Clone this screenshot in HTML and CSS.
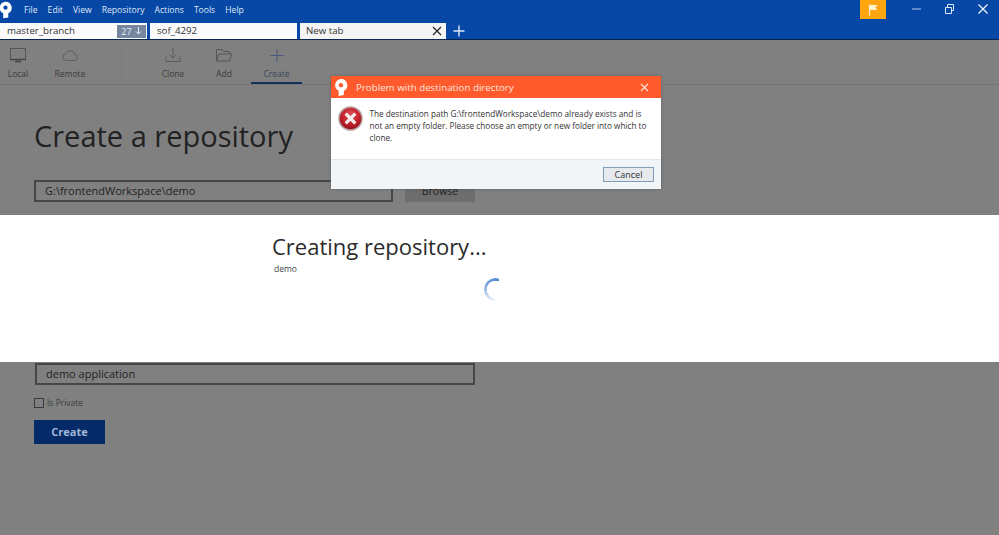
FILE: index.html
```html
<!DOCTYPE html>
<html lang="en">
<head>
<meta charset="utf-8">
<title>Sourcetree</title>
<link rel="stylesheet" href="styles.css">
</head>
<body>
<div class="app">
  <header class="titlebar">
    <div class="menurow">
      <svg class="logo" width="13" height="18" viewBox="0 0 14 18"><path d="M7 0a6.600 6.600 0 0 1 3 12.500V17L4.500 18V12.500A6.600 6.600 0 0 1 7 0z" fill="#fff"/><circle cx="7" cy="6.500" r="2.300" fill="#0747a6"/></svg>
      <nav class="menu"><span>File</span><span>Edit</span><span>View</span><span>Repository</span><span>Actions</span><span>Tools</span><span>Help</span></nav>
      <div class="flag"><svg width="12" height="12" viewBox="0 0 12 12"><path d="M2.500 0.500V11.500" stroke="#fff3d0" stroke-width="1.200"/><path d="M3 1H10.500L8.500 3.500L10.500 6H3z" fill="#fff3d0"/></svg></div>
      <div class="winbtns">
        <svg width="10" height="12" viewBox="0 0 10 12"><path d="M0 6H9" stroke="#b5cdee"/></svg>
        <svg width="10" height="12" viewBox="0 0 10 12"><path d="M0.500 4.500H6.500V10.500H0.500zM2.500 4.500V1.500H8.500V7.500H6.500" fill="none" stroke="#dde8f6"/></svg>
        <svg width="10" height="12" viewBox="0 0 10 12"><path d="M0.500 1.500L9.500 10.500M9.500 1.500L0.500 10.500" stroke="#fff" stroke-width="1.100"/></svg>
      </div>
    </div>
    <div class="tabrow">
      <div class="tab tab-repo"><span>master_branch</span><span class="badge">27 <svg width="7" height="8" viewBox="0 0 7 8"><path d="M3.500 0V7M1 4.500L3.500 7L6 4.500" fill="none" stroke="#e8edf4"/></svg></span></div>
      <div class="tab tab-repo"><span>sof_4292</span></div>
      <div class="tab tab-new"><span>New tab</span><svg width="10" height="10" viewBox="0 0 10 10"><path d="M1 1L9 9M9 1L1 9" stroke="#222" stroke-width="1.200"/></svg></div>
      <svg class="addtab" width="12" height="12" viewBox="0 0 12 12"><path d="M6 0.500V11.500M0.500 6H11.500" stroke="#dbe7f7" stroke-width="1.400"/></svg>
    </div>
  </header>

  <div class="toolbar">
    <div class="tool tool-local">
      <svg width="18" height="17" viewBox="0 0 18 17"><path d="M1.500 1.500H16.500V12.500H1.500z" fill="none" stroke="#555"/><path d="M1 12.500H17M6 14.500H12" stroke="#444" stroke-width="1.500"/></svg>
      <span>Local</span>
    </div>
    <div class="tool tool-remote">
      <svg width="18" height="17" viewBox="0 0 18 17"><path d="M5 13.500H13.500A3 3 0 0 0 14 7.600A5 5 0 0 0 4.800 6.300A3.700 3.700 0 0 0 5 13.500z" fill="none" stroke="#5e5e5e"/></svg>
      <span>Remote</span>
    </div>
    <div class="toolsep"></div>
    <div class="tool tool-clone">
      <svg width="18" height="17" viewBox="0 0 18 17"><path d="M9 1V11M5.500 7.500L9 11L12.500 7.500M2 9.500V14.500H16V9.500" fill="none" stroke="#5a5a5a"/></svg>
      <span>Clone</span>
    </div>
    <div class="tool tool-add">
      <svg width="18" height="17" viewBox="0 0 18 17"><path d="M1.500 14V2.500H7L8.500 4.500H14.500V7M1.500 14L4 7H17L14.500 14z" fill="none" stroke="#555"/></svg>
      <span>Add</span>
    </div>
    <div class="tool tool-create">
      <svg width="18" height="17" viewBox="0 0 18 17"><path d="M9 2V15M2.500 8.500H15.500" stroke="#45597a"/></svg>
      <span>Create</span>
    </div>
  </div>

  <main class="page">
    <h1>Create a repository</h1>
    <div class="pathrow">
      <div class="field field-path">G:\frontendWorkspace\demo</div>
      <div class="browse">Browse</div>
    </div>
    <div class="field field-desc">demo application</div>
    <label class="private"><span class="check"></span>Is Private</label>
    <div class="create-btn">Create</div>
  </main>

  <section class="band">
    <div class="progress">
      <h2>Creating repository...</h2>
      <p>demo</p>
    </div>
    <div class="spinner"></div>
  </section>

  <section class="dialog">
    <div class="dlg-title">
      <svg width="14" height="17" viewBox="0 0 14 18"><path d="M7 0a6.600 6.600 0 0 1 3 12.500V17L4.500 18V12.500A6.600 6.600 0 0 1 7 0z" fill="#fff"/><circle cx="7" cy="6.500" r="2.300" fill="#ff5a2c"/></svg>
      <span class="dlg-caption">Problem with destination directory</span>
      <svg width="9" height="9" viewBox="0 0 9 9"><path d="M1 1L8 8M8 1L1 8" stroke="#ffe4da" stroke-width="1.100"/></svg>
    </div>
    <div class="dlg-body">
      <svg class="err" width="25" height="25" viewBox="0 0 26 26"><defs><radialGradient id="errfill" cx="50%" cy="35%" r="65%"><stop offset="0" stop-color="#e0525a"/><stop offset="0.600" stop-color="#c2202c"/><stop offset="1" stop-color="#8e1018"/></radialGradient></defs><circle cx="13" cy="13" r="12" fill="url(#errfill)" stroke="#b7a3a3" stroke-width="1.600"/><path d="M8 8L18 18M18 8L8 18" stroke="#f6eeee" stroke-width="3.400"/></svg>
      <p>The destination path G:\frontendWorkspace\demo already exists and is not an empty folder. Please choose an empty or new folder into which to clone.</p>
    </div>
    <div class="dlg-foot"><div class="cancel">Cancel</div></div>
  </section>
</div>
</body>
</html>
```
FILE: styles.css
```css
* { box-sizing: border-box; }
html, body { margin: 0; height: 100%; overflow: hidden; }
body { font-family: "Open Sans", "Noto Sans", sans-serif; color: #222; background: #808080; }
.app { position: relative; width: 999px; height: 535px; display: flex; flex-direction: column; }

.titlebar { height: 40px; background: #0747a6; border-bottom: 1px solid #08264f; flex: none; }
.menurow { height: 22px; display: flex; align-items: flex-start; }
.logo { margin: 1px 0 0 -1px; flex: none; }
.menu { display: flex; gap: 10px; margin-left: 12px; padding-top: 3px; font-size: 8.600px; line-height: 14px; color: #dfe9f7; }
.flag { margin-left: auto; width: 26px; height: 19px; background: #ffa60f; display: flex; align-items: center; justify-content: center; }
.winbtns { width: 113px; display: flex; justify-content: space-between; padding: 3px 11px 0 26px; height: 19px; }

.tabrow { display: flex; gap: 3px; height: 17px; align-items: flex-start; padding-top: 1px; }
.tab { height: 16px; background: #fafafa; font-size: 9.700px; line-height: 16px; color: #333; display: flex; align-items: center; justify-content: space-between; }
.tab-repo { width: 147px; padding: 0 1px 0 7px; }
.tab-new { width: 146px; padding: 0 4px 0 6px; background: #f4f4f4; }
.badge { width: 29px; height: 13px; background: #76869f; color: #e8edf4; font-size: 9px; line-height: 13px; display: flex; align-items: center; justify-content: center; gap: 3px; }
.addtab { margin: 2px 0 0 4px; }

.toolbar { height: 45px; display: flex; border-bottom: 1px solid #767676; flex: none; position: relative; }
.tool { display: flex; flex-direction: column; align-items: center; font-size: 8.500px; line-height: 12px; color: #3c3c3c; padding-top: 7px; gap: 4px; }
.tool svg { flex: none; }
.tool-local { width: 36px; }
.tool-remote { width: 40px; margin-left: 14px; }
.toolsep { width: 1px; height: 34px; margin: 5px 0 0 31px; background: #7a7a7a; }
.tool-clone { width: 40px; margin-left: 31px; }
.tool-add { width: 30px; margin-left: 16px; }
.tool-create { width: 51px; margin-left: 12px; border-bottom: 2px solid #12305c; color: #3a4658; }

.page { flex: 1; padding: 31px 0 0 34px; }
h1 { margin: 0; font-size: 29px; font-weight: 400; line-height: 40px; color: #222; }
.pathrow { display: flex; gap: 12px; margin-top: 24px; }
.field { height: 22px; border: 2px solid #474747; font-size: 11px; line-height: 18px; padding-left: 9px; color: #222; }
.field-path { width: 359px; }
.browse { width: 70px; height: 22px; background: #6e6e6e; font-size: 10.500px; line-height: 22px; text-align: center; color: #222; }
.field-desc { width: 440px; margin: 161px 0 0 1px; }
.private { display: flex; align-items: center; gap: 3px; margin-top: 11px; height: 13px; font-size: 8.500px; color: #3c3c3c; }
.check { width: 10px; height: 10px; border: 1px solid #3a3a3a; }
.create-btn { width: 71px; height: 24px; margin-top: 11px; background: #042a68; color: #a3b7d8; font-size: 11px; font-weight: 700; line-height: 24px; text-align: center; }

.band { position: absolute; left: 0; right: 0; top: 215px; height: 147px; background: #fff; }
.progress { position: absolute; left: 272px; top: 15px; }
h2 { margin: 0; font-size: 22px; font-weight: 400; line-height: 32px; color: #2b2b2b; }
.progress p { margin: 1px 0 0 2px; font-size: 8.500px; line-height: 12px; color: #444; }
.spinner { position: absolute; left: 484px; top: 63px; width: 23px; height: 23px; border-radius: 50%; background: conic-gradient(from 170deg, rgba(91,143,216,0) 0deg, #cfe0f5 50deg, #7ea6dd 130deg, #4f86d6 210deg, rgba(79,134,214,0) 211deg); -webkit-mask: radial-gradient(circle, transparent 8.500px, #000 9px); mask: radial-gradient(circle, transparent 8.500px, #000 9px); }

.dialog { position: absolute; left: 331px; top: 76px; width: 330px; height: 113px; background: #fff; display: flex; flex-direction: column; box-shadow: 0 0 3px rgba(60,60,60,.4); }
.dlg-title { height: 22px; background: #ff5a2c; display: flex; align-items: center; padding: 0 12px 0 3px; flex: none; }
.dlg-caption { flex: 1; margin-left: 8px; font-size: 9.750px; color: #ffe6dc; }
.dlg-body { flex: 1; display: flex; padding: 7px 6px 0 7px; gap: 6.500px; }
.err { flex: none; margin-top: 1px; }
.dlg-body p { margin: 3px 0 0; font-size: 8.200px; line-height: 12px; color: #333; }
.dlg-foot { height: 30px; background: #f2f5f8; border-top: 1px solid #e3e6ea; display: flex; justify-content: flex-end; padding: 7px 7px 0 0; flex: none; }
.cancel { width: 51px; height: 15px; background: #e6e9ed; border: 1px solid #7f9db9; font-size: 9px; line-height: 13px; text-align: center; color: #333; }
```
